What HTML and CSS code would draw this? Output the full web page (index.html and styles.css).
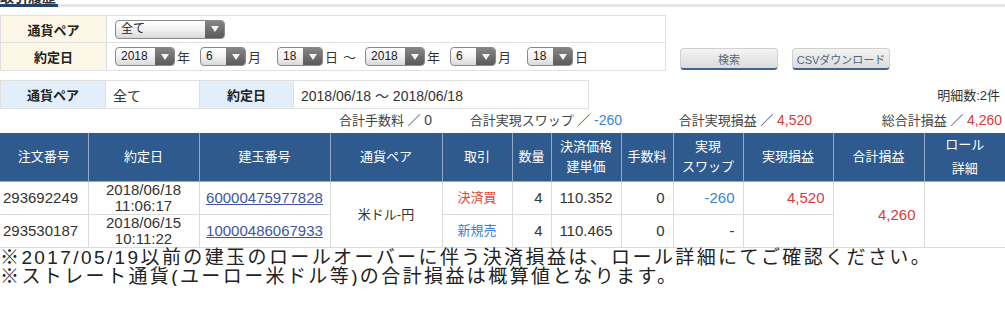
FILE: index.html
```html
<!DOCTYPE html>
<html lang="ja">
<head>
    <meta charset="UTF-8">
    <meta name="viewport" content="width=device-width, initial-scale=1.0">
    <title>取引履歴</title>
    <link rel="stylesheet" href="styles.css">
</head>
<body>
    <div class="tab-bar"><span class="tab">取引履歴</span></div>

    <!-- search conditions -->
    <div class="search">
        <table class="search-form">
            <tr class="row-pair">
                <th>通貨ペア</th>
                <td>
                    <div class="sel w-pair"><span class="sel-val">全て</span><span class="sel-btn"></span></div>
                </td>
            </tr>
            <tr class="row-date">
                <th>約定日</th>
                <td>
                    <div class="date-row">
                        <span class="unit"><span class="sel w-year"><span class="sel-val">2018</span><span class="sel-btn"></span></span><span class="lbl">年</span></span>
                        <span class="unit gap-m"><span class="sel w-md"><span class="sel-val">6</span><span class="sel-btn"></span></span><span class="lbl">月</span></span>
                        <span class="unit gap-d"><span class="sel w-md"><span class="sel-val">18</span><span class="sel-btn"></span></span><span class="lbl">日</span></span>
                        <span class="tilde">～</span>
                        <span class="unit gap-y"><span class="sel w-year"><span class="sel-val">2018</span><span class="sel-btn"></span></span><span class="lbl">年</span></span>
                        <span class="unit gap-m"><span class="sel w-md"><span class="sel-val">6</span><span class="sel-btn"></span></span><span class="lbl">月</span></span>
                        <span class="unit gap-d"><span class="sel w-md"><span class="sel-val">18</span><span class="sel-btn"></span></span><span class="lbl">日</span></span>
                    </div>
                </td>
            </tr>
        </table>
        <div class="buttons">
            <button class="btn">検索</button>
            <button class="btn">CSVダウンロード</button>
        </div>
    </div>

    <!-- current condition -->
    <div class="info">
        <table class="info-table">
            <tr>
                <th class="c-lbl">通貨ペア</th>
                <td class="c-pair">全て</td>
                <th class="c-lbl2">約定日</th>
                <td>2018/06/18 ～ 2018/06/18</td>
            </tr>
        </table>
        <div class="count">明細数:2件</div>
    </div>

    <div class="summary">
        <div class="sum-item">合計手数料 ／ <span class="v">0</span></div>
        <div class="sum-item">合計実現スワップ ／ <span class="v blue">-260</span></div>
        <div class="sum-item">合計実現損益 ／ <span class="v red">4,520</span></div>
        <div class="sum-item">総合計損益 ／ <span class="v red">4,260</span></div>
    </div>

    <table class="history">
        <colgroup>
            <col style="width:88px"><col style="width:111px"><col style="width:131px"><col style="width:112px">
            <col style="width:70px"><col style="width:39px"><col style="width:70px"><col style="width:52px">
            <col style="width:70px"><col style="width:90px"><col style="width:91px"><col style="width:81px">
        </colgroup>
        <thead>
            <tr>
                <th>注文番号</th>
                <th>約定日</th>
                <th>建玉番号</th>
                <th>通貨ペア</th>
                <th>取引</th>
                <th>数量</th>
                <th>決済価格<br>建単価</th>
                <th>手数料</th>
                <th>実現<br>スワップ</th>
                <th>実現損益</th>
                <th>合計損益</th>
                <th class="roll">ロール<br>詳細</th>
            </tr>
        </thead>
        <tbody>
            <tr>
                <td class="left">293692249</td>
                <td class="date">2018/06/18<br>11:06:17</td>
                <td class="center"><a href="#" class="pos-link">60000475977828</a></td>
                <td class="center jp" rowspan="2">米ドル-円</td>
                <td class="center jp red">決済買</td>
                <td class="right">4</td>
                <td class="right">110.352</td>
                <td class="right">0</td>
                <td class="right blue">-260</td>
                <td class="right red">4,520</td>
                <td class="right red" rowspan="2">4,260</td>
                <td rowspan="2"></td>
            </tr>
            <tr>
                <td class="left">293530187</td>
                <td class="date">2018/06/15<br>10:11:22</td>
                <td class="center"><a href="#" class="pos-link">10000486067933</a></td>
                <td class="center jp blue">新規売</td>
                <td class="right">4</td>
                <td class="right">110.465</td>
                <td class="right">0</td>
                <td class="right">-</td>
                <td class="right"></td>
            </tr>
        </tbody>
    </table>

    <div class="notes">
        <p>※2017/05/19以前の建玉のロールオーバーに伴う決済損益は、ロール詳細にてご確認ください。</p>
        <p>※ストレート通貨(ユーロー米ドル等)の合計損益は概算値となります。</p>
    </div>
</body>
</html>
```

FILE: styles.css
```css
body {
    margin: 0;
    font-family: "Liberation Sans", "Noto Sans CJK JP", sans-serif;
    font-size: 13px;
    color: #333;
    background: #fff;
}

/* top tab, mostly scrolled out of view */
.tab-bar {
    display: flex;
    align-items: flex-end;
    height: 4px;
    border-bottom: 3px solid #e6e6e6;
}
.tab {
    font-size: 14px;
    font-weight: bold;
    line-height: 14px;
    padding-right: 2px;
    margin-bottom: -3px;
    border-bottom: 3px solid #25436c;
    color: #333;
}

/* search form */
.search {
    display: flex;
    align-items: flex-end;
    margin-top: 8px;
}
.search-form {
    width: 666px;
    border-collapse: collapse;
    border: 1px solid #e0e0e0;
}
.search-form th {
    width: 105px;
    padding: 0;
    background: #fcf6e6;
    border: 1px solid #e0e0e0;
    font-weight: bold;
    text-align: center;
    color: #222;
}
.search-form td {
    padding: 0 0 0 8px;
    border: 1px solid #e0e0e0;
}
.row-pair { height: 27px; }
.row-date { height: 28px; }

.sel {
    display: inline-flex;
    box-sizing: border-box;
    height: 19px;
    border: 1px solid #8a8a8a;
    border-radius: 4px;
    overflow: hidden;
    background: linear-gradient(#ffffff, #f2f2f2 50%, #d9d9d9);
    vertical-align: middle;
}
.w-pair { width: 110px; }
.w-year { width: 60px; }
.w-md { width: 46px; }
.sel-val {
    flex: 1;
    padding-left: 5px;
    font-size: 12px;
    line-height: 17px;
    color: #222;
}
.sel-btn {
    width: 19px;
    display: flex;
    align-items: center;
    justify-content: center;
    background: linear-gradient(#858585, #5a5a5a);
}
.sel-btn::after {
    content: "";
    border-left: 4px solid transparent;
    border-right: 4px solid transparent;
    border-top: 6px solid #f4f4f4;
}
.date-row {
    display: flex;
    align-items: center;
}
.unit {
    display: flex;
    align-items: center;
}
.lbl { margin-left: 2px; }
.gap-m { margin-left: 10px; }
.gap-d { margin-left: 16px; }
.gap-y { margin-left: 9px; }
.tilde { margin-left: 5px; }

.buttons {
    display: flex;
    gap: 14px;
    margin-left: 14px;
    padding-bottom: 1px;
}
.btn {
    width: 98px;
    height: 22px;
    padding: 0;
    border: 1px solid #d0d0d0;
    border-bottom: 2px solid #42628f;
    border-radius: 4px;
    background: linear-gradient(#f3f3f3, #dcdcdc);
    color: #55667c;
    font-family: "Liberation Sans", "Noto Sans CJK JP", sans-serif;
    font-size: 11px;
    white-space: nowrap;
}

/* current condition */
.info {
    display: flex;
    align-items: center;
    justify-content: space-between;
    margin-top: 9px;
}
.info-table {
    width: 589px;
    height: 29px;
    border-collapse: collapse;
    table-layout: fixed;
}
.info-table th,
.info-table td {
    border: 1px solid #e0e0e0;
    padding: 0 0 0 7px;
    text-align: left;
    font-size: 14px;
}
.info-table th {
    background: #e2eef9;
    font-weight: bold;
    font-size: 13px;
    text-align: center;
    padding: 0;
    color: #222;
}
.info-table .c-lbl { width: 104px; }
.info-table .c-pair { width: 86px; }
.info-table .c-lbl2 { width: 93px; }
.count {
    padding-right: 5px;
    color: #333;
}

.summary {
    display: flex;
    justify-content: flex-end;
    align-items: center;
    height: 20px;
    padding: 0 3px 4px 0;
    color: #444;
}
.sum-item {
    width: 190px;
    text-align: right;
}
.sum-item .v { font-size: 14px; }

.red { color: #d93a3a; }
.blue { color: #3a82d6; }

/* history table */
.history {
    width: 1005px;
    border-collapse: collapse;
    table-layout: fixed;
}
.history th {
    height: 44px;
    padding: 0;
    background: #2f5a8d;
    color: #fff;
    font-weight: normal;
    font-size: 13px;
    line-height: 20px;
    border-left: 1px solid #93a9c6;
    border-bottom: 1px solid #93a9c6;
}
.history th:first-child { border-left: none; }
.history th.roll { line-height: 24px; }
.history td {
    height: 32px;
    padding: 0 8px 0 3px;
    border: 1px solid #dcdcdc;
    font-size: 15px;
    line-height: 16px;
    color: #333;
}
.history td:first-child { border-left: none; }
.history td.left { text-align: left; }
.history td.right { text-align: right; }
.history td.center { text-align: center; padding: 0; }
.history td.date { text-align: center; padding: 0; }
.history td.jp { font-size: 13px; }
.history td.red { color: #e04a2e; }
.history td.blue { color: #3a82d6; }
.history td.right.red { color: #d93a3a; }
.pos-link {
    color: #41569e;
    text-decoration: underline;
}

.notes {
    color: #222;
    font-size: 19px;
    letter-spacing: 2.4px;
    line-height: 19px;
}
.notes p {
    margin: 0;
    white-space: nowrap;
}
```
